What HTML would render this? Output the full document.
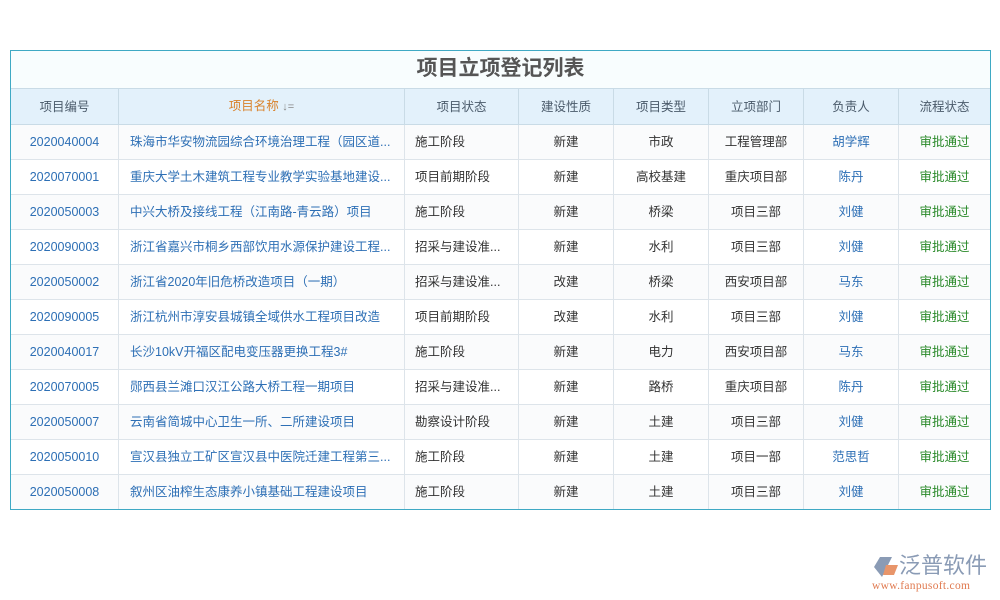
<!DOCTYPE html>
<html><head><meta charset="utf-8"><style>
body{margin:0;width:1000px;height:600px;background:#fff;font-family:"Liberation Sans","Noto Sans CJK SC",sans-serif;position:relative;overflow:hidden}
.wrap{position:absolute;left:10px;top:50px;width:979px;height:458px;border:1px solid #3fa9c4;overflow:hidden}
table{width:981px;margin:-1px;border-collapse:collapse;font-size:12.5px;table-layout:fixed}
td,th{border:1px solid #dde4ea;height:34px;line-height:34px;vertical-align:middle;text-align:center;padding:0;white-space:nowrap;overflow:hidden;color:#333}
.t td{height:38px;line-height:38px;font-size:21px;font-weight:bold;color:#555;background:#f8fdfe;border:none;border-bottom:1px solid #c9dbe6}
th{background:#e3f1fb;color:#4a5a6a;font-weight:normal;border-color:#c9dbe6}
td.id{color:#2d6fb5}
td.n{text-align:left;padding-left:11px;color:#2d6fb5}
td.s{text-align:left;padding-left:10px}
td.p{color:#2d6fb5}
td.g{color:#2a8a2a}
tr:nth-child(odd) td{background:#fafbfc}
.t td{background:#f8fdfe!important}
</style></head><body>
<div class="wrap"><table>
<colgroup><col style="width:108px"><col style="width:286px"><col style="width:114px"><col style="width:95px"><col style="width:95px"><col style="width:95px"><col style="width:95px"><col></colgroup>
<tr class="t"><td colspan="8">项目立项登记列表</td></tr>
<tr><th>项目编号</th><th style="color:#d9822b">项目名称 <span style="color:#888;font-size:11px">↓=</span></th><th>项目状态</th><th>建设性质</th><th>项目类型</th><th>立项部门</th><th>负责人</th><th>流程状态</th></tr>
<tr><td class="id">2020040004</td><td class="n">珠海市华安物流园综合环境治理工程（园区道...</td><td class="s">施工阶段</td><td>新建</td><td>市政</td><td>工程管理部</td><td class="p">胡学辉</td><td class="g">审批通过</td></tr>
<tr><td class="id">2020070001</td><td class="n">重庆大学土木建筑工程专业教学实验基地建设...</td><td class="s">项目前期阶段</td><td>新建</td><td>高校基建</td><td>重庆项目部</td><td class="p">陈丹</td><td class="g">审批通过</td></tr>
<tr><td class="id">2020050003</td><td class="n">中兴大桥及接线工程（江南路-青云路）项目</td><td class="s">施工阶段</td><td>新建</td><td>桥梁</td><td>项目三部</td><td class="p">刘健</td><td class="g">审批通过</td></tr>
<tr><td class="id">2020090003</td><td class="n">浙江省嘉兴市桐乡西部饮用水源保护建设工程...</td><td class="s">招采与建设准...</td><td>新建</td><td>水利</td><td>项目三部</td><td class="p">刘健</td><td class="g">审批通过</td></tr>
<tr><td class="id">2020050002</td><td class="n">浙江省2020年旧危桥改造项目（一期）</td><td class="s">招采与建设准...</td><td>改建</td><td>桥梁</td><td>西安项目部</td><td class="p">马东</td><td class="g">审批通过</td></tr>
<tr><td class="id">2020090005</td><td class="n">浙江杭州市淳安县城镇全域供水工程项目改造</td><td class="s">项目前期阶段</td><td>改建</td><td>水利</td><td>项目三部</td><td class="p">刘健</td><td class="g">审批通过</td></tr>
<tr><td class="id">2020040017</td><td class="n">长沙10kV开福区配电变压器更换工程3#</td><td class="s">施工阶段</td><td>新建</td><td>电力</td><td>西安项目部</td><td class="p">马东</td><td class="g">审批通过</td></tr>
<tr><td class="id">2020070005</td><td class="n">郧西县兰滩口汉江公路大桥工程一期项目</td><td class="s">招采与建设准...</td><td>新建</td><td>路桥</td><td>重庆项目部</td><td class="p">陈丹</td><td class="g">审批通过</td></tr>
<tr><td class="id">2020050007</td><td class="n">云南省简城中心卫生一所、二所建设项目</td><td class="s">勘察设计阶段</td><td>新建</td><td>土建</td><td>项目三部</td><td class="p">刘健</td><td class="g">审批通过</td></tr>
<tr><td class="id">2020050010</td><td class="n">宣汉县独立工矿区宣汉县中医院迁建工程第三...</td><td class="s">施工阶段</td><td>新建</td><td>土建</td><td>项目一部</td><td class="p">范思哲</td><td class="g">审批通过</td></tr>
<tr><td class="id">2020050008</td><td class="n">叙州区油榨生态康养小镇基础工程建设项目</td><td class="s">施工阶段</td><td>新建</td><td>土建</td><td>项目三部</td><td class="p">刘健</td><td class="g">审批通过</td></tr>
</table></div>
<svg style="position:absolute;left:872px;top:555px" width="28" height="24" viewBox="0 0 28 24"><path d="M8 2 L20 2 L10 22 L2 12 Z" fill="#8a9bb5"/><path d="M14 10 L26 10 L22 20 L11 20 Z" fill="#e8956a"/></svg>
<div style="position:absolute;left:899px;top:551px;font-size:22px;color:#8a9bb5;font-family:'Noto Sans CJK SC',sans-serif;line-height:26px">泛普软件</div>
<div style="position:absolute;left:872px;top:580px;font-size:11.5px;color:#e07a50;font-family:'Liberation Serif',serif;letter-spacing:0.3px">www.fanpusoft.com</div>
</body></html>
